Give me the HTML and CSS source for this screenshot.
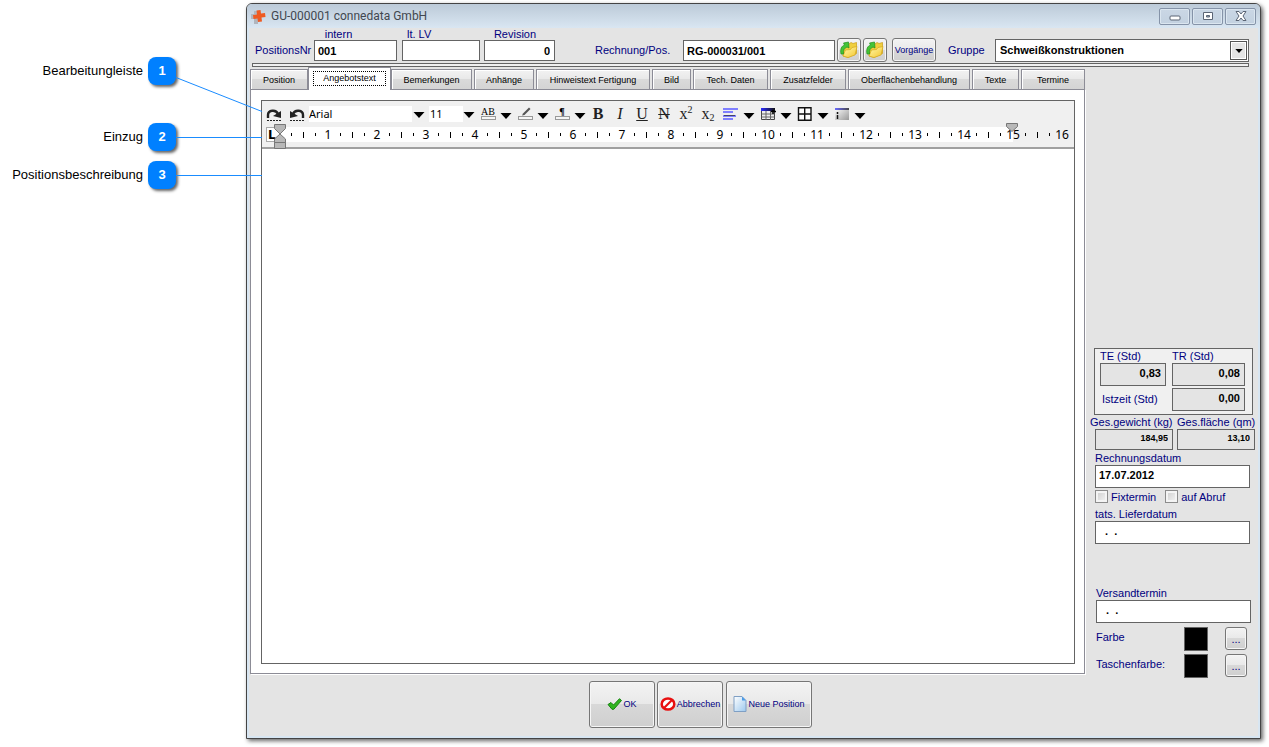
FILE: index.html
```html
<!DOCTYPE html>
<html lang="de">
<head>
<meta charset="utf-8">
<title>GU-000001 connedata GmbH</title>
<link rel="stylesheet" href="styles.css">
</head>
<body>
<svg width="0" height="0" class="sprite" aria-hidden="true">
  <defs>
    <linearGradient id="folderFill" x1="0" y1="0" x2="1" y2="1"><stop offset="0" stop-color="#fffbb0"/><stop offset="1" stop-color="#f4c52c"/></linearGradient>
    <linearGradient id="pageFill" x1="0" y1="0" x2="1" y2="1"><stop offset="0" stop-color="#ffffff"/><stop offset="1" stop-color="#9cc8ee"/></linearGradient>
    <linearGradient id="headFill"><stop offset="0" stop-color="#2b2bff"/><stop offset="1" stop-color="#111"/></linearGradient>
    <linearGradient id="listFill" x1="0" y1="0" x2="1" y2="1"><stop offset="0" stop-color="#fff"/><stop offset="1" stop-color="#999"/></linearGradient>
    <symbol id="arrow" viewBox="0 0 12 6"><path d="M0.5 0h11L6 6z"/></symbol>
    <symbol id="folder" viewBox="0 0 18 18">
      <path d="M3 6l6-3 2-1.500 2 1 3.500-1v11L8 16.500 3 15z" fill="#f0cf3e" stroke="#c99c18" stroke-width=".7"/>
      <path d="M3 15l2.500-6 5-.5 1.500-2 5-1L15 14l-7 2.500z" fill="url(#folderFill)" stroke="#d2a81d" stroke-width=".7"/>
      <path d="M1 13C0 8 1.500 5 4.500 4L3.500 2l5-1 .5 6-2-1C4.500 7 3 9 3.500 13z" fill="#43c437" stroke="#238f1d" stroke-width=".7"/>
    </symbol>
  </defs>
</svg>

<aside class="notes">
  <ol class="note-list">
    <li><span>Bearbeitungleiste</span><b class="badge">1</b></li>
    <li class="note-indent"><span>Einzug</span><b class="badge">2</b></li>
    <li class="note-body"><span>Positionsbeschreibung</span><b class="badge">3</b></li>
  </ol>
  <svg class="leaders" width="86" height="190" viewBox="0 0 86 190" fill="none" stroke="#1a8cff" aria-hidden="true">
    <path d="M0 77.500L86 111.500M0 137.500H86M0 175.500H86"/>
  </svg>
</aside>

<main class="window">
  <header class="titlebar">
    <svg class="logo" width="15" height="15" viewBox="0 0 15 15"><path d="M3 4h3V1h4v3h3v5h-3v5H6V9H3z" fill="#b0b5bd" transform="translate(-3 1)"/><path d="M5.500 1.500L9.500 1l.5 3.500 4-.5.500 4-4 .5.500 4-4 .5L6.500 9.500l-4 .5L2 6l4-.5z" fill="#ee5a22"/></svg>
    <h1>GU-000001 connedata GmbH</h1>
    <button class="caption" aria-label="Minimieren"><svg width="12" height="10" viewBox="0 0 12 10"><rect x="1" y="5" width="10" height="4" rx="1" fill="#fff" stroke="#5b6575"/></svg></button>
    <button class="caption" aria-label="Maximieren"><svg width="12" height="10" viewBox="0 0 12 10"><path d="M1.500 1.500h9v7h-9z" fill="#fff" stroke="#5b6575"/><path d="M4.500 4.500h3v1.500h-3z" fill="#9ab" stroke="#5b6575"/></svg></button>
    <button class="caption" aria-label="Schließen"><svg width="12" height="10" viewBox="0 0 12 10"><path d="M1 .5h3l2 2.500 2-2.500h3L8 5l3 4.500H8L6 7 4 9.500H1L4 5z" fill="#fff" stroke="#5b6575"/></svg></button>
  </header>

  <div class="content">
    <form class="head">
      <span class="side-label pos-label">PositionsNr</span>
      <label class="stack w-intern">intern<input class="field" value="001"></label>
      <label class="stack w-lv">lt. LV<input class="field"></label>
      <label class="stack w-rev">Revision<input class="field num" value="0"></label>
      <label class="side-label bill-label" for="bill">Rechnung/Pos.</label>
      <input id="bill" class="field w-bill" value="RG-000031/001">
      <button type="button" class="btn square" aria-label="Rechnung öffnen"><svg width="18" height="18"><use href="#folder"/></svg></button>
      <button type="button" class="btn square" aria-label="Position öffnen"><svg width="18" height="18"><use href="#folder"/></svg></button>
      <button type="button" class="btn ops">Vorgänge</button>
      <label class="side-label group-label" for="group">Gruppe</label>
      <span class="combo">
        <select id="group"><option>Schweißkonstruktionen</option></select>
        <span class="combo-button"><svg width="8" height="4"><use href="#arrow"/></svg></span>
      </span>
    </form>
    <div class="rule"></div>

    <div class="middle">
      <section class="notebook">
        <nav class="tabs" role="tablist">
          <button role="tab" class="tab t-position">Position</button>
          <button role="tab" class="tab active" aria-selected="true"><span>Angebotstext</span></button>
          <button role="tab" class="tab t-bemerkungen">Bemerkungen</button>
          <button role="tab" class="tab t-anhaenge">Anhänge</button>
          <button role="tab" class="tab t-hinweis">Hinweistext Fertigung</button>
          <button role="tab" class="tab t-bild">Bild</button>
          <button role="tab" class="tab t-tech">Tech. Daten</button>
          <button role="tab" class="tab t-zusatz">Zusatzfelder</button>
          <button role="tab" class="tab t-ober">Oberflächenbehandlung</button>
          <button role="tab" class="tab t-texte">Texte</button>
          <button role="tab" class="tab t-termine">Termine</button>
        </nav>
        <div class="panel">
          <div class="editor">
            <div class="toolbar">
              <button class="tool history" aria-label="Wiederholen"><svg width="16" height="14" viewBox="0 0 16 14"><path d="M2 10V7c0-5 8-6 10-1" fill="none" stroke="#222" stroke-width="2.400"/><path d="M7 8l8 2V3z" fill="#222"/><path d="M1 12.500h14" stroke="#222" stroke-dasharray="2 1"/></svg></button>
              <button class="tool history" aria-label="Rückgängig"><svg width="16" height="14" viewBox="0 0 16 14"><path d="M14 10V7c0-5-8-6-10-1" fill="none" stroke="#222" stroke-width="2.400"/><path d="M9 8l-8 2V3z" fill="#222"/><path d="M1 12.500h14" stroke="#222" stroke-dasharray="2 1"/></svg></button>
              <span class="picker font-picker"><select aria-label="Schriftart"><option>Arial</option></select><svg width="12" height="6"><use href="#arrow"/></svg></span>
              <span class="picker size-picker"><select aria-label="Schriftgröße"><option>11</option></select><svg width="12" height="6"><use href="#arrow"/></svg></span>
              <button class="tool drop" aria-label="Textfarbe"><span class="swatch-icon"><span>AB</span><i></i></span><svg class="caret" width="12" height="6"><use href="#arrow"/></svg></button>
              <button class="tool drop" aria-label="Hervorheben"><span class="swatch-icon"><svg width="15" height="9" viewBox="0 0 15 9"><path d="M4 8.500l1-2L11 .5l1.500 1.500L6.500 8z" fill="#555"/></svg><i></i></span><svg class="caret" width="12" height="6"><use href="#arrow"/></svg></button>
              <button class="tool drop" aria-label="Absatzfarbe"><span class="swatch-icon"><b>¶</b><i></i></span><svg class="caret" width="12" height="6"><use href="#arrow"/></svg></button>
              <span class="styles">
                <button class="tool glyph"><b>B</b></button>
                <button class="tool glyph"><em>I</em></button>
                <button class="tool glyph"><u>U</u></button>
                <button class="tool glyph"><s>N</s></button>
                <button class="tool glyph"><span>x<sup>2</sup></span></button>
                <button class="tool glyph"><span>x<sub>2</sub></span></button>
              </span>
              <button class="tool drop" aria-label="Ausrichtung"><svg width="16" height="14" viewBox="0 0 16 14"><path d="M0 2h15M0 5h10M0 9h13M0 12h10" stroke="#7f7fff" stroke-width="2"/><path d="M1 8.500h11" stroke="#446"/></svg><svg class="caret" width="12" height="6"><use href="#arrow"/></svg></button>
              <button class="tool drop" aria-label="Tabelle"><svg width="16" height="14" viewBox="0 0 16 14"><path d="M1.500 1.500h13v11h-13z" fill="#eee" stroke="#444"/><path d="M1 1h14v3H1z" fill="url(#headFill)"/><path d="M1.500 7h13M1.500 10h13M6 4v9M10.500 4v9" stroke="#666"/><path d="M11 4.500h5M13 3v4" stroke="#000" stroke-width="1.500"/></svg><svg class="caret" width="12" height="6"><use href="#arrow"/></svg></button>
              <button class="tool drop" aria-label="Rahmen"><svg width="16" height="14" viewBox="0 0 16 14"><path d="M1.500.700h12.500v12.500H1.500zM7.700.700v12.500M1.500 7H14" fill="#fff" stroke="#111" stroke-width="1.400"/></svg><svg class="caret" width="12" height="6"><use href="#arrow"/></svg></button>
              <button class="tool drop" aria-label="Liste"><svg width="16" height="14" viewBox="0 0 16 14"><path d="M1 1h14v12H1z" fill="url(#listFill)"/><path d="M1 1h14v2H1z" fill="url(#headFill)" opacity=".7"/><path d="M3.500 5v2M3.500 8v4" stroke="#111" stroke-width="1.500"/></svg><svg class="caret" width="12" height="6"><use href="#arrow"/></svg></button>
            </div>
            <div class="ruler">
              <span class="tabstop">L</span>
              <svg class="indent" width="12" height="25" viewBox="0 0 12 25" fill="#b8b8b8" stroke="#777"><path d="M.5.5h11v4L6 10 .5 4.500zM6 10l5.500 5v3.500H.5V15zM.5 18.500h11v6H.5z"/></svg>
              <div class="scale">
                <div><i></i><i></i><i></i><b>1</b></div><div><i></i><i></i><i></i><b>2</b></div>
                <div><i></i><i></i><i></i><b>3</b></div><div><i></i><i></i><i></i><b>4</b></div>
                <div><i></i><i></i><i></i><b>5</b></div><div><i></i><i></i><i></i><b>6</b></div>
                <div><i></i><i></i><i></i><b>7</b></div><div><i></i><i></i><i></i><b>8</b></div>
                <div><i></i><i></i><i></i><b>9</b></div><div><i></i><i></i><i></i><b>10</b></div>
                <div><i></i><i></i><i></i><b>11</b></div><div><i></i><i></i><i></i><b>12</b></div>
                <div><i></i><i></i><i></i><b>13</b></div><div><i></i><i></i><i></i><b>14</b></div>
                <div class="last"><i></i><i></i><i></i><b>15</b><svg class="right-indent" width="12" height="9" viewBox="0 0 12 9"><path d="M.5.500h11v3L6 8.500.5 3.500z" fill="#b8b8b8" stroke="#777"/></svg></div>
                <div class="outside"><i></i><i></i><i></i><b>16</b></div>
              </div>
            </div>
            <textarea class="text" aria-label="Positionsbeschreibung"></textarea>
          </div>
        </div>
      </section>

      <form class="details">
        <div class="times">
          <label for="te">TE (Std)</label><label for="tr">TR (Std)</label>
          <input id="te" class="field num tall" value="0,83" readonly>
          <input id="tr" class="field num tall" value="0,08" readonly>
          <label for="ist" class="ist">Istzeit (Std)</label>
          <input id="ist" class="field num tall" value="0,00" readonly>
        </div>
        <div class="totals">
          <label>Ges.gewicht (kg)<input class="field num small" value="184,95" readonly></label>
          <label>Ges.fläche (qm)<input class="field num small" value="13,10" readonly></label>
        </div>
        <label class="date">Rechnungsdatum<input class="field tall" value="17.07.2012"></label>
        <div class="checks">
          <label><input type="checkbox">Fixtermin</label>
          <label><input type="checkbox">auf Abruf</label>
        </div>
        <label class="date">tats. Lieferdatum<input class="field tall" value="  .  ."></label>
        <label class="date shipping">Versandtermin<input class="field tall" value="  .  ."></label>
        <div class="colors">
          <span>Farbe</span><i class="color"></i><button type="button" class="btn more">...</button>
          <span>Taschenfarbe:</span><i class="color"></i><button type="button" class="btn more">...</button>
        </div>
      </form>
    </div>

    <footer class="actions">
      <button class="btn action"><svg width="15" height="12" viewBox="0 0 15 12"><path d="M1 6.500l3-2 2.500 2.500L12.500.700l2 1.800L6.800 11.300H5z" fill="#2fb41e" stroke="#178211"/></svg>OK</button>
      <button class="btn action"><svg width="16" height="14" viewBox="0 0 16 14"><ellipse cx="8" cy="7" rx="6.300" ry="5.600" fill="#fff" stroke="#e80f0f" stroke-width="2.500"/><path d="M4 11l8-8" stroke="#e80f0f" stroke-width="2.200"/></svg>Abbrechen</button>
      <button class="btn action wide"><svg width="14" height="16" viewBox="0 0 14 16"><path d="M1 .5h8l4 4v11H1z" fill="url(#pageFill)" stroke="#7f9fc4"/><path d="M9 .5v4h4z" fill="#4d9be6"/></svg>Neue Position</button>
    </footer>
  </div>
</main>
</body>
</html>
```
FILE: styles.css
```css
* { box-sizing: border-box; }

body {
  margin: 0;
  min-height: 100vh;
  display: flex;
  position: relative;
  background: #fff;
  color: #000080;
  font: 11px/12px "Liberation Sans", Arial, sans-serif;
}

button, input, select, textarea { font: inherit; color: inherit; margin: 0; padding: 0; border-radius: 0; }
svg { display: block; flex: none; }
.sprite { position: absolute; }

/* Callouts */
.notes { flex: none; width: 246px; color: #000; font-size: 13px; }
.note-list { list-style: none; margin: 0; padding: 57px 70px 0 0; }
.note-list li { display: flex; justify-content: flex-end; align-items: center; gap: 5px; }
.note-list .note-indent { margin-top: 38px; }
.note-list .note-body { margin-top: 10px; }
.badge {
  width: 28px;
  height: 28px;
  border-radius: 8px;
  background: #0080ff;
  color: #fff;
  box-shadow: 2px 2px 3px #666;
  line-height: 28px;
  text-align: center;
}
.leaders { position: absolute; left: 176px; top: 0; z-index: 2; }

/* Window frame */
.window {
  flex: 1;
  min-width: 0;
  display: flex;
  flex-direction: column;
  margin: 3px 8px 8px 0;
  padding: 0 2px 2px;
  border: 1px solid #444;
  border-radius: 6px 6px 0 0;
  background: #d8e6f2;
  box-shadow: 2px 2px 4px #666;
}
.titlebar {
  display: flex;
  align-items: center;
  height: 24px;
  margin: 0 -2px;
  padding: 0 4px;
  gap: 2px;
  border-radius: 5px 5px 0 0;
  background: linear-gradient(#bccad8, #d9e6f2);
  color: #41474f;
}
.titlebar h1 { flex: 1; margin: 0 0 0 3px; font: 12px/16px Roboto, "Open Sans", sans-serif; }
.caption {
  display: grid;
  place-items: center;
  width: 31px;
  height: 17px;
  border: 1px solid #8593a8;
  border-radius: 2px;
  background: linear-gradient(#cad7e5, #c3d1e0);
  box-shadow: inset 0 0 0 1px #dbe6f0;
}
.content { flex: 1; display: flex; flex-direction: column; background: #e4e4e4; }

/* Record header */
.head { display: flex; align-items: flex-end; height: 34px; padding: 0 9px 0 6px; }
.field {
  display: block;
  width: 100%;
  height: 21px;
  padding: 0 4px 0 3px;
  border: 1px solid #646464;
  background: #fff;
  color: #000;
  font-weight: bold;
}
.field[readonly] { background: #e4e4e4; }
.num { text-align: right; }
.tall { height: 23px; padding-bottom: 3px; }
.small { font-size: 9px; padding-bottom: 3px; }
.stack { display: block; text-align: center; margin-bottom: 1px; }
.w-intern { width: 83px; text-indent: -34px; }
.w-intern .field, .w-lv .field, .w-rev .field { text-indent: 0; }
.w-lv { width: 78px; margin-left: 5px; text-align: left; text-indent: 5px; }
.w-rev { width: 71px; margin-left: 4px; text-indent: -9px; }
.w-bill { width: 152px; margin: 0 2px 1px 0; }
.side-label { flex: none; margin-bottom: 6px; }
.pos-label { width: 59px; }
.bill-label { width: 88px; margin-left: 40px; }
.group-label { width: 47px; margin-left: 12px; }
.btn {
  display: flex;
  align-items: center;
  justify-content: center;
  border: 1px solid #767676;
  border-radius: 3px;
  background: linear-gradient(#f3f3f3, #e9e9e9 48%, #d8d8d8 50%, #cfcfcf);
  box-shadow: inset 0 0 0 1px #f6f6f6;
  color: #000080;
}
.square { flex: none; width: 24px; height: 24px; margin-right: 2px; }
.ops { flex: none; width: 44px; height: 24px; margin-left: 3px; font-size: 9px; }
.combo { flex: 1; position: relative; height: 23px; }
.combo select {
  appearance: none;
  width: 100%;
  height: 23px;
  padding: 0 20px 2px 4px;
  border: 1px solid #646464;
  background: #fff;
  color: #000;
  font-weight: bold;
}
.combo-button {
  position: absolute;
  top: 2px;
  right: 2px;
  display: grid;
  place-items: center;
  width: 17px;
  height: 19px;
  border: 1px solid #555;
  background: #e4e4e4;
  box-shadow: inset 0 0 0 1px #fff;
  color: #000;
  pointer-events: none;
}
.rule { height: 4px; margin: 1px 9px 0 3px; border: 1px solid #646464; background: #f0f0f0; }

/* Tabs */
.middle { flex: 1; display: flex; }
.notebook { flex: 1; min-width: 0; display: flex; flex-direction: column; padding-left: 1px; }
.tabs { display: flex; align-items: flex-end; height: 22px; gap: 2px; }
.tab {
  flex: none;
  height: 20px;
  border: 1px solid #8c8c96;
  border-bottom: 0;
  background: linear-gradient(#f2f2f2, #e9e9e9 45%, #dadada 50%, #d4d4d4);
  box-shadow: inset 1px 1px #fff;
  color: #000;
  font-size: 9px;
  white-space: nowrap;
}
.tab.active {
  position: relative;
  height: 23px;
  width: 83px;
  margin: 0 -2px -1px;
  padding: 0 4px 2px;
  background: #fff;
}
.tab.active span { display: block; border: 1px dotted #000; line-height: 13px; }
.t-position { width: 58px; }
.t-bemerkungen { width: 81px; }
.t-anhaenge { width: 60px; }
.t-hinweis { width: 114px; }
.t-bild { width: 39px; }
.t-tech { width: 75px; }
.t-zusatz { width: 76px; }
.t-ober { width: 122px; }
.t-texte { width: 47px; }
.t-termine { width: 64px; }
.panel {
  flex: 1;
  display: flex;
  padding: 10px 9px 9px 10px;
  border: 1px solid #8c8c96;
  background: #fff;
  margin-right: 1px;
  box-shadow: 1px 1px #fff;
}

/* Editor */
.editor { flex: 1; min-width: 0; display: flex; flex-direction: column; border: 1px solid #646464; color: #000; }
.toolbar { display: flex; align-items: center; height: 23px; padding: 2px 4px 0; background: #f0f0f0; }
.tool { border: 0; background: none; flex: none; }
.history { width: 23px; height: 20px; padding-top: 2px; }
.picker { position: relative; flex: none; height: 16px; }
.picker select { appearance: none; display: block; height: 16px; border: 0; background: #fff; font: 11px/16px "Noto Sans", sans-serif; }
.picker svg { position: absolute; right: 0; top: 6px; pointer-events: none; }
.font-picker { width: 116px; margin-right: 4px; margin-left: -3px; }
.font-picker select { width: 103px; }
.size-picker { width: 46px; margin-right: 5px; }
.size-picker select { width: 34px; padding-left: 1px; }
.drop { display: flex; align-items: center; width: 37px; gap: 4px; }
.caret { margin-top: 4px; }
.swatch-icon { display: flex; flex-direction: column; align-items: center; width: 16px; font: 10px/9px "Liberation Serif", serif; }
.swatch-icon i { width: 15px; height: 4px; border: 1px solid #999; background: #f5f5f5; }
.swatch-icon b, .swatch-icon span { height: 9px; }
.styles { display: flex; margin: 0 4px 0 -4px; }
.glyph { width: 22px; height: 20px; color: #222; font: 16px/20px "Liberation Serif", serif; }
.glyph sup, .glyph sub { font-size: 10px; line-height: 0; }
.glyph sub { vertical-align: -2px; }
.ruler {
  display: flex;
  align-items: flex-start;
  height: 25px;
  padding: 3px 0 0 4px;
  border-bottom: 2px solid #a0a0a0;
  background: #f0f0f0;
  position: relative;
}
.tabstop {
  width: 14px;
  height: 15px;
  border: 1px solid #aaa;
  background: #fff;
  font: bold 12px/14px "DejaVu Sans", sans-serif;
  text-indent: 1px;
}
.indent { position: absolute; left: 12px; top: 0; z-index: 1; }
.scale { flex: 1; display: flex; height: 15px; padding: 0 5px; background: linear-gradient(#fff, #fff) 0 0 / 5px 15px no-repeat; }
.scale div { flex: 1; display: grid; grid-template-columns: repeat(4, 1fr); place-items: center; position: relative; background: #fff; }
.scale .last { background: linear-gradient(90deg, #fff 86%, #f0f0f0 86%); }
.scale .outside { background: none; }
.scale i { width: 1px; height: 3px; background: #000; }
.scale i:nth-child(2) { height: 6px; }
.scale b { font: 12px/15px "Noto Sans", sans-serif; }
.right-indent { position: absolute; right: 2px; top: -4px; z-index: 1; }
.text { flex: 1; width: 100%; border: 0; resize: none; outline: 0; padding: 4px; background: #fff; }

/* Right column */
.details { flex: none; width: 172px; padding: 281px 4px 0 8px; margin-bottom: -8px; }
.times {
  display: grid;
  grid-template-columns: 66px 73px;
  gap: 0 6px;
  padding: 0 0 3px 5px;
  border: 1px solid #646464;
  margin-right: 1px;
  background: #f0f0f0;
}
.times label { line-height: 14px; }
.times .ist { align-self: center; padding-left: 2px; }
#ist { margin-top: 2px; }
.totals { display: flex; gap: 4px; margin: 0 -4px 0 1px; }
.totals label { width: 78px; line-height: 14px; white-space: nowrap; }
.totals label:first-child { text-indent: -5px; }
.totals .field { text-indent: 0; }
.date { display: block; width: 156px; padding-left: 1px; margin-top: 1px; line-height: 14px; }
.checks { display: flex; gap: 9px; margin: 2px 0 4px 1px; }
.checks label { display: flex; align-items: center; gap: 3px; height: 13px; }
.checks input {
  appearance: none;
  width: 13px;
  height: 13px;
  border: 1px solid #8c8c8c;
  background: linear-gradient(135deg, #ccc, #f6f6f6);
  box-shadow: inset 0 0 0 2px #f4f4f4;
}
.checks input:checked { background: #000080; }
.date.shipping { margin-top: 42px; padding-left: 2px; width: 157px; }
.colors { display: grid; grid-template-columns: 88px 24px 22px; row-gap: 3px; align-items: start; margin: 4px 0 0 2px; }
.colors span { padding-top: 4px; }
.color { height: 24px; border: 1px solid #646464; background: #000; }
.more { width: 22px; height: 23px; margin-left: 17px; }

/* Actions */
.actions { display: flex; gap: 2px; height: 62px; padding: 7px 0 0 340px; }
.action { width: 66px; height: 47px; gap: 1px; padding-bottom: 2px; font-size: 9px; }
.wide { width: 86px; margin-left: 1px; }
```
